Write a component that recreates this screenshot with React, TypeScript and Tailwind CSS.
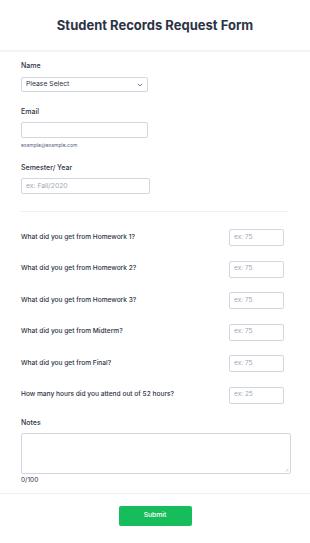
import React from 'react';

const scoreRows = [
    { label: 'What did you get from Homework 1?', ph: 'ex: 75' },
    { label: 'What did you get from Homework 2?', ph: 'ex: 75' },
    { label: 'What did you get from Homework 3?', ph: 'ex: 75' },
    { label: 'What did you get from Midterm?', ph: 'ex: 75' },
    { label: 'What did you get from Final?', ph: 'ex: 75' },
    { label: 'How many hours did you attend out of 52 hours?', ph: 'ex: 25' },
];

export default function App() {
    return (
        <div className="w-[310px] min-h-[543px] bg-white text-[#2c3345]" style={{ fontFamily: 'Inter, "Noto Sans", sans-serif' }}>
            {/* header */}
            <div className="pt-[17px] pb-[16px] text-center border-b-2 border-[#f3f3f6]">
                <h1 className="text-[13px] leading-[17px] font-bold">Student Records Request Form</h1>
            </div>

            <div className="px-[21px] pt-[9px]">
                <label className="block text-[7px] leading-[10px] font-medium">Name</label>
                <div className="mt-[6px] w-[127px] h-[15px] border border-[#d3d6e0] rounded-[2px] flex items-center justify-between px-[4px]">
                    <span className="text-[6.8px] text-[#2c3345]">Please Select</span>
                    <svg width="6" height="4" viewBox="0 0 6 4" fill="none">
                        <path d="M0.8 0.8L3 3L5.2 0.8" stroke="#57647e" strokeWidth="0.8" />
                    </svg>
                </div>

                <label className="block mt-[15px] text-[7px] leading-[10px] font-medium">Email</label>
                <div className="mt-[5px] w-[127px] h-[16px] border border-[#d3d6e0] rounded-[2px]" />
                <div className="mt-[4px] text-[5px] leading-[7px] text-[#57647e]">example@example.com</div>

                <label className="block mt-[14px] text-[7px] leading-[10px] font-medium">Semester/ Year</label>
                <div className="mt-[5px] w-[129px] h-[16px] border border-[#d3d6e0] rounded-[2px] flex items-center px-[4px]">
                    <span className="text-[6.8px] text-[#a0a7b6]">ex: Fall/2020</span>
                </div>

                <div className="mt-[17px] border-t border-[#f0f1f4]" />

                <div className="pt-[17px] flex flex-col gap-[14.5px] pr-[5px]">
                    {scoreRows.map(row => (
                        <div key={row.label} className="flex items-center justify-between h-[17px]">
                            <span className="text-[6.6px] font-medium">{row.label}</span>
                            <div className="w-[55px] h-[17px] border border-[#d3d6e0] rounded-[2px] flex items-center px-[4px]">
                                <span className="text-[6.5px] text-[#a0a7b6]">{row.ph}</span>
                            </div>
                        </div>
                    ))}
                </div>

                <label className="block mt-[14px] text-[7px] leading-[10px] font-medium">Notes</label>
                <div className="mt-[5px] relative w-[270px] h-[41px] border border-[#d3d6e0] rounded-[2px]">
                    <svg className="absolute right-[1px] bottom-[1px]" width="4" height="4" viewBox="0 0 4 4">
                        <path d="M3.5 0.5L0.5 3.5M3.5 2L2 3.5" stroke="#b0b5c2" strokeWidth="0.5" />
                    </svg>
                </div>
                <div className="mt-[2px] text-[6.5px] leading-[9px] text-[#2c3345]">0/100</div>
            </div>

            <div className="mt-[8px] border-t border-[#f0f1f4] pt-[12px] pb-[16px] flex justify-center">
                <button className="w-[73px] h-[20px] rounded-[2px] bg-[#18bd5b] text-white text-[6.8px] font-medium">
                    Submit
                </button>
            </div>
        </div>
    );
}
